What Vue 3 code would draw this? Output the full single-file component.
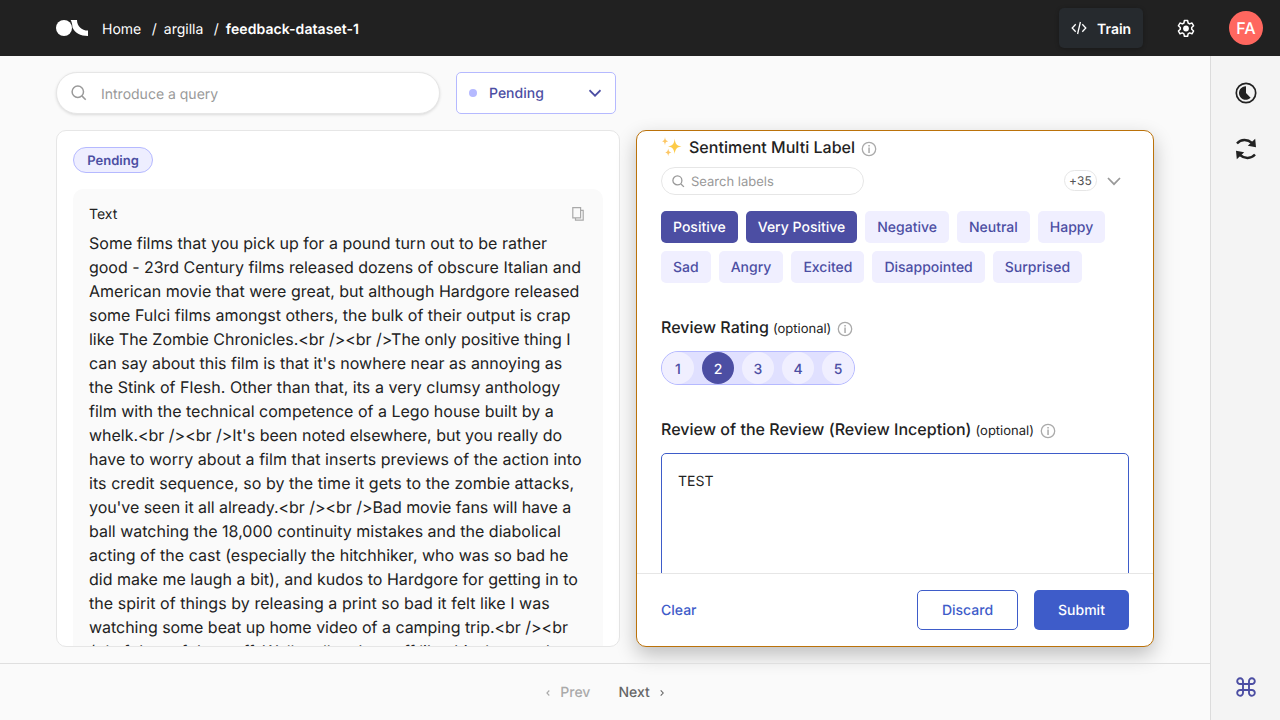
<script setup>
const lines = [
  { t: 'Some films that you pick up for a pound turn out to be rather', ls: 0.016 },
  { t: 'good - 23rd Century films released dozens of obscure Italian and', ls: -0.02 },
  { t: 'American movie that were great, but although Hardgore released', ls: 0 },
  { t: 'some Fulci films amongst others, the bulk of their output is crap', ls: 0.008 },
  { t: 'like The Zombie Chronicles.<br /><br />The only positive thing I', ls: -0.03 },
  { t: "can say about this film is that it's nowhere near as annoying as", ls: 0 },
  { t: 'the Stink of Flesh. Other than that, its a very clumsy anthology', ls: 0.03 },
  { t: 'film with the technical competence of a Lego house built by a', ls: 0.01 },
  { t: "whelk.<br /><br />It's been noted elsewhere, but you really do", ls: -0.02 },
  { t: 'have to worry about a film that inserts previews of the action into', ls: 0.035 },
  { t: 'its credit sequence, so by the time it gets to the zombie attacks,', ls: 0.06 },
  { t: "you've seen it all already.<br /><br />Bad movie fans will have a", ls: -0.045 },
  { t: 'ball watching the 18,000 continuity mistakes and the diabolical', ls: 0 },
  { t: 'acting of the cast (especially the hitchhiker, who was so bad he', ls: 0.008 },
  { t: 'did make me laugh a bit), and kudos to Hardgore for getting in to', ls: 0.025 },
  { t: 'the spirit of things by releasing a print so bad it felt like I was', ls: 0.045 },
  { t: 'watching some beat up home video of a camping trip.<br /><br', ls: -0.03 },
  { t: '/>I of then of the stuff. Well really take stuff like this, Inna and', ls: -0.03 },
]
const labels = [
  { t: 'Positive', on: true }, { t: 'Very Positive', on: true }, { t: 'Negative' }, { t: 'Neutral' }, { t: 'Happy' },
  { t: 'Sad' }, { t: 'Angry' }, { t: 'Excited' }, { t: 'Disappointed' }, { t: 'Surprised' },
]
</script>

<template>
  <div class="app">
    <header class="topbar">
      <svg class="logo" width="32" height="16" viewBox="0 0 32 16" fill="#fff">
        <circle cx="8" cy="8" r="8" />
        <path d="M14.600 0H21C21 6 25.500 10.600 32 10.600V16C24.500 16 18.500 12.500 16.500 7.500C16.300 4.500 15.800 2 14.600 0Z" />
      </svg>
      <nav class="crumbs">
        <span class="c1">Home</span><span class="s1">/</span><span class="c2">argilla</span><span class="s2">/</span><b>feedback-dataset-1</b>
      </nav>
      <button class="train">
        <svg width="16" height="14" viewBox="0 0 16 14" fill="none" stroke="#fff" stroke-width="1.3"><path d="M4.700 3.300L1.200 7l3.500 3.700M11.300 3.300L14.800 7l-3.500 3.700M9.400 1L6.600 13" /></svg>
        <span>Train</span>
      </button>
      <svg class="gear" width="20" height="20" viewBox="0 0 20 20"><path d="M8.400 1.500h3.200l.5 2.500 1.500.9 2.400-.9 1.600 2.800-1.900 1.700v1.800l1.900 1.700-1.600 2.800-2.400-.9-1.500.9-.5 2.500H8.400l-.5-2.500-1.500-.9-2.400.9L2.400 12l1.900-1.700V8.500L2.400 6.800 4 4l2.400.9L7.900 4z" fill="none" stroke="#fff" stroke-width="1.500" stroke-linejoin="round" /><circle cx="10" cy="9.500" r="2.900" fill="#fff" /></svg>
      <div class="avatar">FA</div>
    </header>

    <div class="body">
      <div class="main">
        <div class="content">
          <div class="filters">
            <div class="search">
              <svg width="16" height="16" viewBox="0 0 16 16" fill="none" stroke="#999" stroke-width="1.500"><circle cx="6.800" cy="6.800" r="5.700" /><path d="M10.900 10.900L14.700 14.700" /></svg>
              <span>Introduce a query</span>
            </div>
            <div class="status">
              <i class="dot"></i><span>Pending</span>
              <svg width="12" height="8" viewBox="0 0 12 8" fill="none" stroke="#4c4ea3" stroke-width="1.700"><path d="M.5 1.200l5.500 5.500L11.500 1.200" /></svg>
            </div>
          </div>
          <div class="panels">
            <section class="record">
              <span class="badge">Pending</span>
              <div class="field">
                <div class="fieldhead">
                  <span>Text</span>
                  <svg width="12" height="14" viewBox="0 0 12 14" fill="none" stroke="#a9a9a9" stroke-width="1.200"><path d="M.8.600h7.800v10.200H.8zM8.600 3.400h2.600v9.800H3.500v-2.400" /></svg>
                </div>
                <div class="text"><div v-for="l in lines" :key="l.t" :style="{ letterSpacing: l.ls + 'px' }">{{ l.t }}</div></div>
              </div>
            </section>

            <section class="form">
              <div class="questions">
                <div class="title first">
                  <svg class="spark" width="20" height="20" viewBox="0 0 20 20">
                    <path d="M12.700 1.500C13.300 7 14.500 8.800 19.500 9.400C14.500 10 13.300 12 12.700 17C12 12 10.800 10 6 9.400C10.800 8.800 12 7 12.700 1.500Z" fill="#fdcb48" />
                    <path d="M3 0C3.300 3 4 3.800 6.300 4.200C4 4.600 3.300 5.400 3 8.400C2.600 5.400 2 4.600 0 4.200C2 3.800 2.600 3 3 0ZM6.200 11.500C6.500 14 7.200 15 9.400 15.400C7.200 15.800 6.500 16.700 6.200 19.300C5.900 16.700 5.200 15.800 3.200 15.400C5.200 15 5.900 14 6.200 11.500Z" fill="#fdc766" />
                  </svg>
                  <span>Sentiment Multi Label</span>
                  <svg class="info" width="16" height="16" viewBox="0 0 16 16"><circle cx="8" cy="8" r="6.700" fill="none" stroke="#aaa" stroke-width="1.300" /><path d="M7.300 4h1.500v1.400H7.300zM7.300 6.600h1.500V12H7.300z" fill="#aaa" /></svg>
                </div>
                <div class="labelbar">
                  <div class="labelsearch">
                    <svg width="13" height="13" viewBox="0 0 13 13" fill="none" stroke="#999" stroke-width="1.300"><circle cx="5.400" cy="5.400" r="4.500" /><path d="M8.700 8.700l3.200 3.200" /></svg>
                    <span>Search labels</span>
                  </div>
                  <span class="more">+35</span>
                  <svg width="14" height="9" viewBox="0 0 14 9" fill="none" stroke="#999" stroke-width="1.700"><path d="M1 1l6 6.200L13 1" /></svg>
                </div>
                <div class="labels">
                  <span v-for="l in labels" :key="l.t" class="label" :class="{ on: l.on }">{{ l.t }}</span>
                </div>
                <div class="title rating-title">
                  <span>Review Rating</span><small>(optional)</small>
                  <svg class="info" width="16" height="16" viewBox="0 0 16 16"><circle cx="8" cy="8" r="6.700" fill="none" stroke="#aaa" stroke-width="1.300" /><path d="M7.300 4h1.500v1.400H7.300zM7.300 6.600h1.500V12H7.300z" fill="#aaa" /></svg>
                </div>
                <div class="rating"><span v-for="n in 5" :key="n" :class="{ on: n === 2 }">{{ n }}</span></div>
                <div class="title review-title">
                  <span>Review of the Review (Review Inception)</span><small>(optional)</small>
                  <svg class="info" width="16" height="16" viewBox="0 0 16 16"><circle cx="8" cy="8" r="6.700" fill="none" stroke="#aaa" stroke-width="1.300" /><path d="M7.300 4h1.500v1.400H7.300zM7.300 6.600h1.500V12H7.300z" fill="#aaa" /></svg>
                </div>
                <div class="area">TEST</div>
              </div>
              <footer class="actions">
                <span class="clear">Clear</span>
                <button class="discard">Discard</button>
                <button class="submit">Submit</button>
              </footer>
            </section>
          </div>
        </div>
        <div class="pager">
          <span class="prev"><svg width="6" height="8" viewBox="0 0 6 8" fill="none" stroke="#aaa" stroke-width="1.100"><path d="M4.300 1.500L1.900 4l2.400 2.500" /></svg>Prev</span>
          <span class="next">Next<svg width="6" height="8" viewBox="0 0 6 8" fill="none" stroke="#666" stroke-width="1.100"><path d="M1.700 1.300l2.500 2.700-2.500 2.700" /></svg></span>
        </div>
      </div>

      <aside class="rail">
        <svg width="22" height="22" viewBox="0 0 22 22"><circle cx="11" cy="11" r="9.700" fill="none" stroke="#222" stroke-width="1.700" /><path d="M11 4.200V11L15.600 15.800A6.800 6.800 0 1 1 11 4.200Z" fill="#222" /></svg>
        <svg class="refresh" width="22" height="22" viewBox="0 0 22 22"><path d="M2 5.500C6 1 12.500 1 17 5M20 16.500C16 21 9.500 21 5 17" fill="none" stroke="#222" stroke-width="2.400" /><path d="M20.200 .8L21 9.200L12.800 7.800ZM1.800 21.200L1 12.800L9.200 14.200Z" fill="#222" /></svg>
        <svg class="cmd" width="20" height="20" viewBox="0 0 20 20" fill="none" stroke="#4c4ea3" stroke-width="1.900"><path d="M7 7V4.200A2.900 2.900 0 1 0 4.200 7h11.600A2.900 2.900 0 1 0 13 4.200v11.600A2.900 2.900 0 1 0 15.800 13H4.200A2.900 2.900 0 1 0 7 15.800V7" /></svg>
      </aside>
    </div>
  </div>
</template>

<style>
body { margin: 0; overflow: hidden; }
</style>

<style scoped>
* { box-sizing: border-box; }
.app { width: 1280px; height: 720px; display: flex; flex-direction: column; background: #fafafa; color: #222; font-family: Inter, "Liberation Sans", sans-serif; font-size: 14px; overflow: hidden; text-rendering: geometricPrecision; }
button { font-family: inherit; font-size: 14px; font-weight: 500; padding: 0; border: 0; text-rendering: inherit; }
svg { flex: none; display: block; }
.topbar { height: 56px; flex: none; display: flex; align-items: center; background: #212121; color: #fff; padding: 0 17px 0 56px; }
.crumbs { display: flex; line-height: 20px; margin: 4px 0 0 14px; white-space: nowrap; }
.crumbs b { font-weight: 600; letter-spacing: .06px; }
.s1 { margin: 0 7px 0 11px; }
.s2 { margin: 0 7px 0 10.500px; }
.s1, .c2 { margin-left: 10.500px; }
.c2 { margin-left: 0; }
.train { margin-left: auto; width: 84px; height: 40px; border-radius: 5px; background: #262a2e; color: #fff; display: flex; align-items: center; padding: 0 12px; font-weight: 600; box-shadow: 0 1px 4px rgba(0,0,0,.25); }
.train span { margin: 3px 0 0 10px; }
.gear { margin: 1px 33px 0; }
.avatar { width: 34px; height: 34px; border-radius: 50%; background: #ff675f; font-size: 16px; font-weight: 500; display: flex; align-items: center; justify-content: center; }
.body { display: flex; flex: 1; min-height: 0; }
.main { width: 1210px; display: flex; flex-direction: column; }
.content { height: 607px; padding: 16px 56px; flex: none; }
.filters { display: flex; gap: 16px; height: 42px; }
.search { width: 384px; height: 42px; border: 1px solid #e6e6e6; border-radius: 21px; background: #fff; box-shadow: 0 1px 3px rgba(0,0,0,.13); display: flex; align-items: center; padding-left: 15px; gap: 13px; color: #999; }
.search svg { margin-left: -1px; margin-right: 1px; }
.search span { padding-top: 3px; }
.status { width: 160px; height: 42px; border: 1px solid #b5b9ff; border-radius: 5px; background: #fff; display: flex; align-items: center; padding: 0 14px 0 12px; color: #4c4ea3; font-weight: 500; }
.status span { margin-top: 1px; }
.status svg { margin-left: auto; }
.dot { width: 8px; height: 8px; border-radius: 50%; background: #b5b9ff; margin-right: 12px; }
.panels { display: flex; gap: 16px; margin-top: 16px; height: 517px; }
.record { width: 564px; border: 1px solid #e6e6e6; border-radius: 10px; background: #fff; padding: 16px; overflow: hidden; }
.badge { display: flex; align-items: center; justify-content: center; width: 80px; height: 26px; padding-top: 1px; border: 1px solid #b5b9ff; border-radius: 13px; background: #eeeeff; color: #4c4ea3; font-weight: 600; font-size: 13px; }
.field { margin-top: 16px; background: #fafafa; border-radius: 10px; padding: 16px; width: 530px; }
.fieldhead { height: 18px; display: flex; align-items: center; justify-content: space-between; padding-right: 3px; }
.fieldhead span { margin-top: 1px; }
.text { font-size: 16px; line-height: 24px; margin-top: 8px; white-space: nowrap; }
.form { width: 518px; border: 1px solid #bb720a; border-radius: 10px; background: #fff; display: flex; flex-direction: column; overflow: hidden; box-shadow: 0 8px 20px rgba(0,0,0,.24); }
.questions { height: 442px; padding: 0 24px; overflow: hidden; flex: none; }
.title { display: flex; align-items: center; height: 20px; font-size: 16px; font-weight: 500; white-space: nowrap; letter-spacing: .03px; }
.title small { font-size: 13px; font-weight: 400; margin: 3px 0 0 4px; letter-spacing: 0; }
.info { margin: 3px 0 0 6px; }
.title.first { margin-top: 6px; }
.spark { margin: 0 7px 0 1px; }
.labelbar { display: flex; align-items: center; height: 28px; margin-top: 10px; padding-right: 8px; }
.labelsearch { width: 203px; height: 28px; border: 1px solid #e6e6e6; border-radius: 14px; display: flex; align-items: center; padding-left: 10px; gap: 6px; color: #999; font-size: 13px; margin-right: auto; }
.labelsearch span { padding-top: 1px; }
.more { width: 33px; height: 21px; border: 1px solid #e6e6e6; border-radius: 11px; display: flex; align-items: center; justify-content: center; font-size: 12px; color: #555; margin: -1px 10px 0 0; letter-spacing: .2px; }
.labels { display: flex; flex-wrap: wrap; gap: 8px; margin-top: 16px; }
.label { height: 32px; border-radius: 5px; background: #f0efff; color: #4c4ea3; padding: 0 12px; line-height: 34px; font-weight: 500; }
.label.on { background: #4c4ea3; color: #fff; }
.rating-title { margin-top: 34px; }
.rating { width: 194px; height: 34px; border: 1px solid #b5b9ff; border-radius: 17px; background: #e0e0ff; display: flex; gap: 8px; margin-top: 14px; }
.rating span { width: 32px; height: 32px; border-radius: 50%; background: #f0efff; color: #4c4ea3; text-align: center; line-height: 36px; font-weight: 500; }
.rating .on { background: #4c4ea3; color: #fff; }
.review-title { margin-top: 34px; }
.area { height: 140px; border: 1px solid #3e5cc9; border-radius: 5px; margin-top: 14px; padding: 17px 16px; line-height: 22px; }
.actions { border-top: 1px solid #e6e6e6; height: 73px; display: flex; align-items: center; padding: 0 24px; font-weight: 500; }
.clear { color: #3e5cc9; margin: 1px auto 0 0; }
.discard { width: 101px; height: 40px; border: 1px solid #3e5cc9; border-radius: 5px; background: #fff; color: #3e5cc9; margin-right: 16px; padding-top: 1px; }
.submit { width: 95px; height: 40px; border-radius: 5px; background: #3e5cc9; color: #fff; padding-top: 1px; }
.pager { border-top: 1px solid #dfdfdf; flex: 1; display: flex; justify-content: center; align-items: center; gap: 28px; padding-top: 1px; }
.pager span { display: flex; align-items: center; font-weight: 500; gap: 9px; }
.prev { color: #aaa; }
.next { color: #666; }
.rail { width: 70px; border-left: 1px solid #dcdcdc; background: #f4f4f4; display: flex; flex-direction: column; align-items: center; padding: 26px 0 23px; }
.refresh { margin-top: 34px; }
.cmd { margin-top: auto; }
</style>
